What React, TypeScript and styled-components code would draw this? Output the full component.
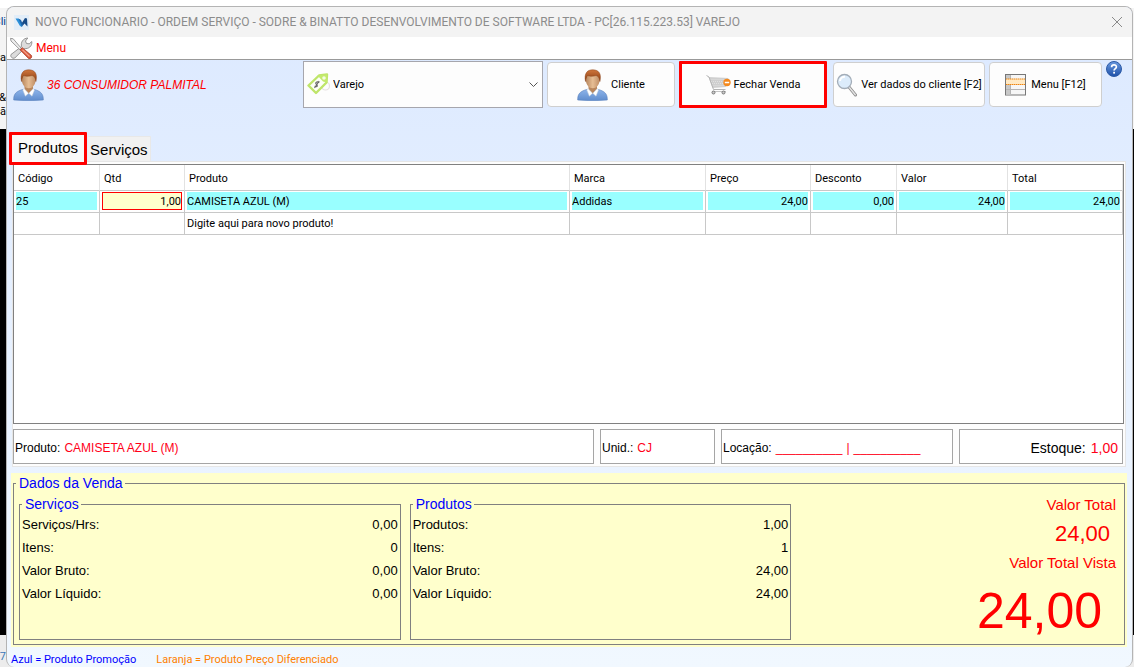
import React from "react";
import styled, { createGlobalStyle } from "styled-components";

const ui = `Roboto, "Noto Sans", sans-serif`;
const arial = `"Liberation Sans", Arial, sans-serif`;

const GlobalStyle = createGlobalStyle`
  *, *::before, *::after { box-sizing: border-box; }
  body { margin: 0; background: #f0f0f0; font: 11px/14px ${ui}; color: #000; }
  button, input, select { font: inherit; color: inherit; margin: 0; }
`;

/* ---------- desktop behind the window ---------- */

const Desktop = styled.div`
  display: grid;
  grid-template-columns: 6px minmax(0, 1fr) 1px;
  min-height: 100vh;
  background: linear-gradient(#fff 0 8px, #f4f4f4 8px 129px, #000 129px calc(100% - 32px), #ececec calc(100% - 32px));
`;

const Behind = styled.div`
  display: flex;
  flex-direction: column;
  overflow: hidden;
  width: 6px;
  padding-top: 15px;
  white-space: nowrap;
`;

const Snippet = styled.span<{ $gap: number; $color?: string }>`
  height: 14px;
  margin-bottom: ${(p) => p.$gap}px;
  color: ${(p) => p.$color ?? "#000"};
  align-self: flex-end;
`;

const LastSnippet = styled(Snippet)`
  margin-top: auto;
`;

/* ---------- window frame ---------- */

const Window = styled.main`
  display: flex;
  flex-direction: column;
  margin-top: 6px;
  border: 1px solid #b4b4b4;
  border-bottom: 0;
  border-radius: 8px;
  overflow: hidden;
  background: linear-gradient(#dce9ff, #f1f8ff);
`;

const TitleBar = styled.header`
  display: flex;
  align-items: center;
  height: 30px;
  padding: 0 9px 0 7px;
  background: #f3f3f3;
`;

const Title = styled.h1`
  flex: 1;
  margin: 0 0 0 6px;
  font: 400 12px/16px ${ui};
  color: #8c8c8c;
  white-space: nowrap;
  overflow: hidden;
`;

const CloseButton = styled.button`
  display: flex;
  padding: 0;
  border: 0;
  background: none;
`;

const MenuBar = styled.nav`
  display: flex;
  align-items: center;
  height: 23px;
  padding-left: 2px;
  background: #fff;
  border-bottom: 1px solid #999;
`;

const MenuItem = styled.button`
  display: flex;
  align-items: center;
  gap: 3px;
  padding: 0;
  border: 0;
  background: none;
  color: #f00;
  font-size: 12px;
`;

/* ---------- toolbar ---------- */

const Toolbar = styled.div`
  display: flex;
  gap: 4px;
  padding: 1px 10px 0 6px;
`;

const Customer = styled.div`
  display: flex;
  flex: 1;
  align-items: center;
  gap: 3px;
  height: 47px;
  min-width: 0;
  font: italic 12px/16px ${arial};
  color: #f00;
  white-space: nowrap;
`;

const Combo = styled.label`
  position: relative;
  display: block;
  width: 240px;
`;

const ComboSelect = styled.select`
  appearance: none;
  width: 100%;
  height: 47px;
  padding: 0 24px 0 29px;
  border: 1px solid #a6a6ad;
  border-radius: 0;
  background: #fdfdfd;
`;

const ComboIcon = styled.span`
  position: absolute;
  left: 4px;
  top: 12px;
  pointer-events: none;
`;

const ComboArrow = styled(ComboIcon)`
  left: auto;
  right: 5px;
`;

const ToolButton = styled.button<{ $w: number; $gap: number; $marked?: boolean }>`
  display: flex;
  align-items: center;
  justify-content: center;
  gap: ${(p) => p.$gap}px;
  width: ${(p) => p.$w}px;
  height: ${(p) => (p.$marked ? 47 : 45)}px;
  margin: ${(p) => (p.$marked ? "0 2px 0 0" : "1px 0 0")};
  padding: 0;
  border: ${(p) => (p.$marked ? "3px solid #f00" : "1px solid #cfcfcf")};
  border-radius: ${(p) => (p.$marked ? 1 : 4)}px;
  background: #fdfdfd;
  white-space: nowrap;
`;

const HelpButton = styled.button`
  display: flex;
  align-self: flex-start;
  padding: 0;
  border: 0;
  background: none;
`;

/* ---------- tabs and sheet ---------- */

const Tabs = styled.div`
  display: flex;
  align-items: flex-end;
  gap: 1px;
  margin-top: 24px;
  padding-left: 2px;
`;

const Tab = styled.button<{ $active?: boolean }>`
  position: relative;
  z-index: ${(p) => (p.$active ? 1 : 0)};
  height: ${(p) => (p.$active ? 33 : 25)}px;
  margin-bottom: ${(p) => (p.$active ? -4 : 0)}px;
  padding: ${(p) => (p.$active ? "0 6px 2px" : "1px 2px 0")};
  border: ${(p) => (p.$active ? "3px solid #f00" : "1px solid #e8e8e8")};
  border-width: ${(p) => (p.$active ? "3px" : "1px 1px 0 0")};
  border-radius: 1px;
  background: ${(p) => (p.$active ? "#f9f9f9" : "#f1f1f1")};
  font: 15px/20px ${arial};
`;

const Sheet = styled.section`
  display: flex;
  flex: 1;
  flex-direction: column;
  gap: 5px;
  margin: 0 6px 0 5px;
  padding: 2px 1px 2px 0;
  border: 1px solid #e6e6e6;
  background: #fdfdfd;
`;

const GridBox = styled.div`
  flex: 1;
  min-height: 200px;
  border: 1px solid #808080;
  background: #fff;
`;

const Table = styled.table`
  width: 100%;
  table-layout: fixed;
  border-collapse: separate;
  border-spacing: 0;
`;

const Col = styled.col<{ $w?: number }>`
  width: ${(p) => (p.$w ? `${p.$w}px` : "auto")};
`;

const Th = styled.th`
  height: 26px;
  padding: 2px 4px 0;
  border-right: 1px solid #e2e2e2;
  border-bottom: 1px solid #c8c8c8;
  font-weight: 400;
  text-align: left;
`;

const Td = styled.td`
  height: 22px;
  padding: 1px 2px 2px;
  border-right: 1px solid #c8c8c8;
  border-bottom: 1px solid #c8c8c8;
`;

const Cell = styled.div<{ $fill?: boolean; $right?: boolean }>`
  height: 18px;
  line-height: 20px;
  background: ${(p) => (p.$fill ? "#99ffff" : "none")};
  text-align: ${(p) => (p.$right ? "right" : "left")};
  white-space: nowrap;
`;

const QtyInput = styled.input`
  display: block;
  width: 100%;
  height: 18px;
  padding: 0;
  border: 1px solid #f00;
  border-radius: 0;
  background: #ffffcc;
  text-align: right;
`;

const InfoRow = styled.div`
  display: grid;
  grid-template-columns: minmax(0, 1fr) 115px 232px 164px;
  gap: 6px;
  padding-right: 1px;
`;

const InfoBox = styled.div<{ $large?: boolean }>`
  display: flex;
  align-items: center;
  justify-content: ${(p) => (p.$large ? "flex-end" : "flex-start")};
  gap: ${(p) => (p.$large ? 5 : 4)}px;
  height: 35px;
  padding: ${(p) => (p.$large ? "2px 4px 0 1px" : "2px 1px 0")};
  border: 1px solid #a5a5a5;
  background: #fff;
  font: ${(p) => (p.$large ? "14px/18px" : "12px/16px")} ${arial};
  white-space: nowrap;
`;

const Red = styled.span`
  color: #ff0018;
`;

/* ---------- sale summary ---------- */

const Summary = styled.section`
  margin: 6px 5px 0 4px;
  padding: 1px 2px 2px;
  background: #ffffcc;
`;

const Group = styled.fieldset`
  min-width: 0;
  margin: 0;
  padding: 0 2px;
  border: 1px solid #808080;
`;

const Legend = styled.legend`
  padding: 0 2px 0 3px;
  font: 14px/18px ${arial};
  color: #00f;
`;

const SummaryGrid = styled.div`
  display: grid;
  grid-template-columns: 382fr 382fr 319fr;
  gap: 9px;
  padding: 3px 3px 4px;
`;

const Figures = styled.dl`
  display: grid;
  grid-template-columns: 1fr auto;
  align-content: start;
  height: 116px;
  margin: 0;
  font: 13px/23px ${arial};
`;

const FigureLabel = styled.dt``;

const FigureValue = styled.dd`
  margin: 0;
  text-align: right;
`;

const Totals = styled.div`
  display: flex;
  flex-direction: column;
  align-items: flex-end;
  padding-right: 3px;
  font: 15px/20px ${arial};
  color: #f00;
`;

const Amount = styled.strong<{ $big?: boolean }>`
  margin: ${(p) => (p.$big ? "9px 14px 0 0" : "0 6px 0 0")};
  font-size: ${(p) => (p.$big ? 50 : 22)}px;
  line-height: ${(p) => (p.$big ? 58 : 38)}px;
  font-weight: 400;
`;

const Footer = styled.footer`
  display: flex;
  gap: 20px;
  height: 20px;
  padding: 6px 4px 0;
`;

const Note = styled.span<{ $color: string }>`
  color: ${(p) => p.$color};
`;

/* ---------- icons ---------- */

const LogoIcon = () => (
  <svg width="15" height="15" viewBox="0 0 15 15" aria-hidden="true">
    <rect width="15" height="15" fill="#e2edf8" />
    <path d="M1.500 3.500 4.500 3.500 8 8 8 12 6 11Z" fill="#2a8fd8" />
    <path d="M7.500 8.500 11 3 13 3.500 13.500 11.500 10.500 8.500 8.500 11Z" fill="#174a86" />
    <path d="M4.500 3.500 7 5 9 9.500 8 12Z" fill="#1c64ab" />
  </svg>
);

const CloseIcon = () => (
  <svg width="12" height="12" viewBox="0 0 12 12" aria-hidden="true">
    <path d="M1 1 11 11M11 1 1 11" stroke="#8a8a8a" strokeWidth="1" fill="none" />
  </svg>
);

const ToolsIcon = () => (
  <svg width="24" height="22" viewBox="0 0 24 22" aria-hidden="true">
    <path
      d="M2 17.500 12.500 9.500C11.500 5.500 14 1.200 18.800 1L16.500 4 17.500 6.500 20.200 6.800 22.800 4.500C23.400 9 19.500 12.300 15.300 11.500L5.800 21C3.500 22 1 19.800 2 17.500Z"
      fill="#dcdcdc"
      stroke="#8c8c8c"
      strokeWidth=".9"
    />
    <path d="M1.500 1.300 4.200 1.800 12.500 11.500 11 12.800 2 4Z" fill="#eee" stroke="#858585" strokeWidth=".8" />
    <path d="M11 12.800 13.300 10.700 22.500 18.500C23.200 20.500 21.800 22 19.800 21.700Z" fill="#dc5a3c" stroke="#a83c28" strokeWidth=".8" />
    <path d="M13.500 12.800 20.500 19.500" stroke="#f4a08a" strokeWidth="1.200" />
  </svg>
);

const PersonIcon = () => (
  <svg width="31" height="32" viewBox="0 0 31 32" aria-hidden="true">
    <defs>
      <linearGradient id="shirt" x1="0" y1="0" x2="0" y2="1">
        <stop offset="0" stopColor="#8db4ea" />
        <stop offset="1" stopColor="#5f8ccd" />
      </linearGradient>
      <linearGradient id="hair" x1="0" y1="0" x2="0" y2="1">
        <stop offset="0" stopColor="#cf763c" />
        <stop offset="1" stopColor="#8a3c12" />
      </linearGradient>
      <linearGradient id="skin" x1="0" y1="0" x2="1" y2="0">
        <stop offset="0" stopColor="#b5845c" />
        <stop offset=".5" stopColor="#e6bd94" />
        <stop offset="1" stopColor="#bd8a62" />
      </linearGradient>
    </defs>
    <path d="M.7 31C.5 25 3 22.500 9.500 20.500L15.500 24 21.500 20.500C28 22.500 30.500 25 30.300 31Q15.500 32.500.7 31Z" fill="url(#shirt)" stroke="#5c83bd" strokeWidth=".6" />
    <path d="M11.500 16H20V21L15.700 25 11.500 21Z" fill="#b9865c" />
    <path d="M11 19.500 15.600 24.300 12.300 27.200 9.800 21ZM20.300 19.500 15.800 24.300 19 27.200 21.500 21Z" fill="#fff" stroke="#b9c6d8" strokeWidth=".5" />
    <path d="M8.500 8C8.500 3 23 3 23 8 23.200 14 20.500 19.300 15.800 19.300 11 19.300 8.300 14 8.500 8Z" fill="url(#skin)" />
    <path d="M8.500 12.500C7 4.500 10 .7 15.800.8 22 .8 24.700 5 22.900 12.500 22.500 8.500 21 7 19 6.500 15.500 7.800 12 7 10.500 6.500 9.500 8 8.800 10 8.500 12.500Z" fill="url(#hair)" stroke="#8a4218" strokeWidth=".5" />
  </svg>
);

const TagIcon = () => (
  <svg width="23" height="22" viewBox="0 0 23 22" aria-hidden="true">
    <circle cx="18.500" cy="13" r="4" fill="none" stroke="#e6e0e0" strokeWidth="1.200" />
    <path d="M1.500 12.500 12 2.500 20 1.500 19.500 9.500 9 20Z" fill="#fcfff6" stroke="#bfe56a" strokeWidth="2.400" strokeLinejoin="round" />
    <path d="M10.500 2.500 20 1.500 20 9.500 16 8.500Z" fill="#c3ea6c" />
    <circle cx="17" cy="5" r="1.800" fill="#f4fbe4" />
    <path d="M12.300 9.500C9.500 7.800 7.800 10.200 9.300 11.200S11 14.500 7.500 13.300M12.200 8 7.500 15" fill="none" stroke="#666" strokeWidth="1.100" />
  </svg>
);

const ChevronIcon = () => (
  <svg width="9" height="23" viewBox="0 0 9 23" aria-hidden="true">
    <path d="M.5 9.500 4.500 13.500 8.500 9.500" fill="none" stroke="#555" strokeWidth="1" />
  </svg>
);

const CartIcon = () => (
  <svg width="25" height="21" viewBox="0 0 25 21" aria-hidden="true">
    <path d="M2.500 3 22.500 4 20 13 6.500 14Z" fill="#cfcfcf" />
    <path d="M4.500 5.500H21.500M5 7.500H21.500M6 9.500H20.500M6.500 11.500H20" stroke="#ececec" strokeWidth=".6" strokeDasharray="1 1" />
    <path d="M.5 1.500 3 3 7.500 15.500H19.500" fill="none" stroke="#b4b4b4" strokeWidth="1" />
    <path d="M6 17.500H20" stroke="#c4c4c4" strokeWidth="1" />
    <circle cx="7.500" cy="18.500" r="1.500" fill="#ccc" stroke="#777" />
    <circle cx="17.500" cy="18.500" r="1.500" fill="#ccc" stroke="#777" />
    <circle cx="21" cy="8.500" r="3.700" fill="#f58a1e" />
    <path d="M18.800 8.500H23.200" stroke="#fff" strokeWidth="1.500" />
  </svg>
);

const LensIcon = () => (
  <svg width="22" height="24" viewBox="0 0 22 24" aria-hidden="true">
    <path d="M13 14 19.500 22" stroke="#8e8e8e" strokeWidth="3" strokeLinecap="round" />
    <path d="M13 14 19.300 21.700" stroke="#e3e3e3" strokeWidth="1.400" strokeLinecap="round" />
    <circle cx="8.500" cy="8.500" r="7" fill="#dcecfb" stroke="#a3adb8" strokeWidth="1.300" />
    <path d="M4 8A4.800 4.800 0 0 1 9 3.800" stroke="#fff" strokeWidth="2" fill="none" />
  </svg>
);

const SheetIcon = () => (
  <svg width="21" height="22" viewBox="0 0 21 22" aria-hidden="true">
    <rect x=".5" y=".5" width="20" height="20.500" fill="#f6f6f6" stroke="#777" />
    <rect x="1" y="1" width="5" height="19.500" fill="#c8c8c8" />
    <path d="M5.500 1V20.500M1 15.500H20" stroke="#b4b4b4" strokeWidth="1" />
    <rect x="1" y="5" width="19" height="5.500" fill="#ffe9c4" />
    <path d="M1 5H20M1 10.500H20" stroke="#f0860f" strokeWidth="1.200" strokeDasharray="1.500 .5" />
  </svg>
);

const HelpIcon = () => (
  <svg width="16" height="16" viewBox="0 0 16 16" aria-hidden="true">
    <defs>
      <linearGradient id="ball" x1="0" y1="0" x2="0" y2="1">
        <stop offset="0" stopColor="#6b9ae0" />
        <stop offset="1" stopColor="#1d50a8" />
      </linearGradient>
    </defs>
    <circle cx="8" cy="8" r="7.500" fill="url(#ball)" stroke="#2c5aa6" />
    <path d="M5.600 6.200C5.600 3.200 10.500 3.200 10.400 6 10.300 7.700 8.100 7.700 8.100 9.600" fill="none" stroke="#fff" strokeWidth="1.700" />
    <rect x="7.200" y="10.800" width="1.800" height="1.800" fill="#fff" />
  </svg>
);

/* ---------- data ---------- */

const columns: { title: string; width?: number }[] = [
  { title: "Código", width: 86 },
  { title: "Qtd", width: 85 },
  { title: "Produto" },
  { title: "Marca", width: 136 },
  { title: "Preço", width: 105 },
  { title: "Desconto", width: 86 },
  { title: "Valor", width: 111 },
  { title: "Total", width: 115 },
];

const groups = [
  {
    title: "Serviços",
    rows: [["Serviços/Hrs:", "0,00"], ["Itens:", "0"], ["Valor Bruto:", "0,00"], ["Valor Líquido:", "0,00"]],
  },
  {
    title: "Produtos",
    rows: [["Produtos:", "1,00"], ["Itens:", "1"], ["Valor Bruto:", "24,00"], ["Valor Líquido:", "24,00"]],
  },
];

export default function App() {
  return (
    <Desktop>
      <GlobalStyle />
      <Behind aria-hidden="true">
        <Snippet $gap={22} $color="#003a8c">Cli</Snippet>
        <Snippet $gap={26}>ta</Snippet>
        <Snippet $gap={0}>&amp;</Snippet>
        <Snippet $gap={0}>çã</Snippet>
        <LastSnippet $gap={3} $color="#3a78b8">7</LastSnippet>
      </Behind>
      <Window>
        <TitleBar>
          <LogoIcon />
          <Title>
            NOVO FUNCIONARIO - ORDEM SERVIÇO - SODRE &amp; BINATTO DESENVOLVIMENTO DE SOFTWARE LTDA - PC[26.115.223.53] VAREJO
          </Title>
          <CloseButton aria-label="Fechar">
            <CloseIcon />
          </CloseButton>
        </TitleBar>
        <MenuBar>
          <MenuItem>
            <ToolsIcon />
            Menu
          </MenuItem>
        </MenuBar>
        <Toolbar>
          <Customer>
            <PersonIcon />
            36 CONSUMIDOR PALMITAL
          </Customer>
          <Combo>
            <ComboIcon>
              <TagIcon />
            </ComboIcon>
            <ComboSelect aria-label="Tipo de venda" defaultValue="Varejo">
              <option>Varejo</option>
            </ComboSelect>
            <ComboArrow>
              <ChevronIcon />
            </ComboArrow>
          </Combo>
          <ToolButton $w={128} $gap={3}>
            <PersonIcon />
            Cliente
          </ToolButton>
          <ToolButton $w={148} $gap={3} $marked>
            <CartIcon />
            Fechar Venda
          </ToolButton>
          <ToolButton $w={152} $gap={3}>
            <LensIcon />
            Ver dados do cliente [F2]
          </ToolButton>
          <ToolButton $w={113} $gap={5}>
            <SheetIcon />
            Menu [F12]
          </ToolButton>
          <HelpButton aria-label="Ajuda">
            <HelpIcon />
          </HelpButton>
        </Toolbar>
        <Tabs role="tablist">
          <Tab role="tab" aria-selected="true" $active>
            Produtos
          </Tab>
          <Tab role="tab" aria-selected="false">
            Serviços
          </Tab>
        </Tabs>
        <Sheet>
          <GridBox>
            <Table>
              <colgroup>
                {columns.map((c) => (
                  <Col key={c.title} $w={c.width} />
                ))}
              </colgroup>
              <thead>
                <tr>
                  {columns.map((c) => (
                    <Th key={c.title}>{c.title}</Th>
                  ))}
                </tr>
              </thead>
              <tbody>
                <tr>
                  <Td><Cell $fill>25</Cell></Td>
                  <Td><QtyInput aria-label="Quantidade" defaultValue="1,00" /></Td>
                  <Td><Cell $fill>CAMISETA AZUL (M)</Cell></Td>
                  <Td><Cell $fill>Addidas</Cell></Td>
                  <Td><Cell $fill $right>24,00</Cell></Td>
                  <Td><Cell $fill $right>0,00</Cell></Td>
                  <Td><Cell $fill $right>24,00</Cell></Td>
                  <Td><Cell $fill $right>24,00</Cell></Td>
                </tr>
                <tr>
                  <Td />
                  <Td />
                  <Td><Cell>Digite aqui para novo produto!</Cell></Td>
                  <Td />
                  <Td />
                  <Td />
                  <Td />
                  <Td />
                </tr>
              </tbody>
            </Table>
          </GridBox>
          <InfoRow>
            <InfoBox>
              Produto: <Red>CAMISETA AZUL (M)</Red>
            </InfoBox>
            <InfoBox>
              Unid.: <Red>CJ</Red>
            </InfoBox>
            <InfoBox>
              Locação: <Red>__________</Red> <Red>|</Red> <Red>__________</Red>
            </InfoBox>
            <InfoBox $large>
              Estoque: <Red>1,00</Red>
            </InfoBox>
          </InfoRow>
        </Sheet>
        <Summary>
          <Group>
            <Legend>Dados da Venda</Legend>
            <SummaryGrid>
              {groups.map((g) => (
                <Group key={g.title}>
                  <Legend>{g.title}</Legend>
                  <Figures>
                    {g.rows.map(([label, value]) => (
                      <React.Fragment key={label}>
                        <FigureLabel>{label}</FigureLabel>
                        <FigureValue>{value}</FigureValue>
                      </React.Fragment>
                    ))}
                  </Figures>
                </Group>
              ))}
              <Totals>
                <span>Valor Total</span>
                <Amount>24,00</Amount>
                <span>Valor Total Vista</span>
                <Amount $big>24,00</Amount>
              </Totals>
            </SummaryGrid>
          </Group>
        </Summary>
        <Footer>
          <Note $color="#00f">Azul = Produto Promoção</Note>
          <Note $color="#ff8000">Laranja = Produto Preço Diferenciado</Note>
        </Footer>
      </Window>
    </Desktop>
  );
}
